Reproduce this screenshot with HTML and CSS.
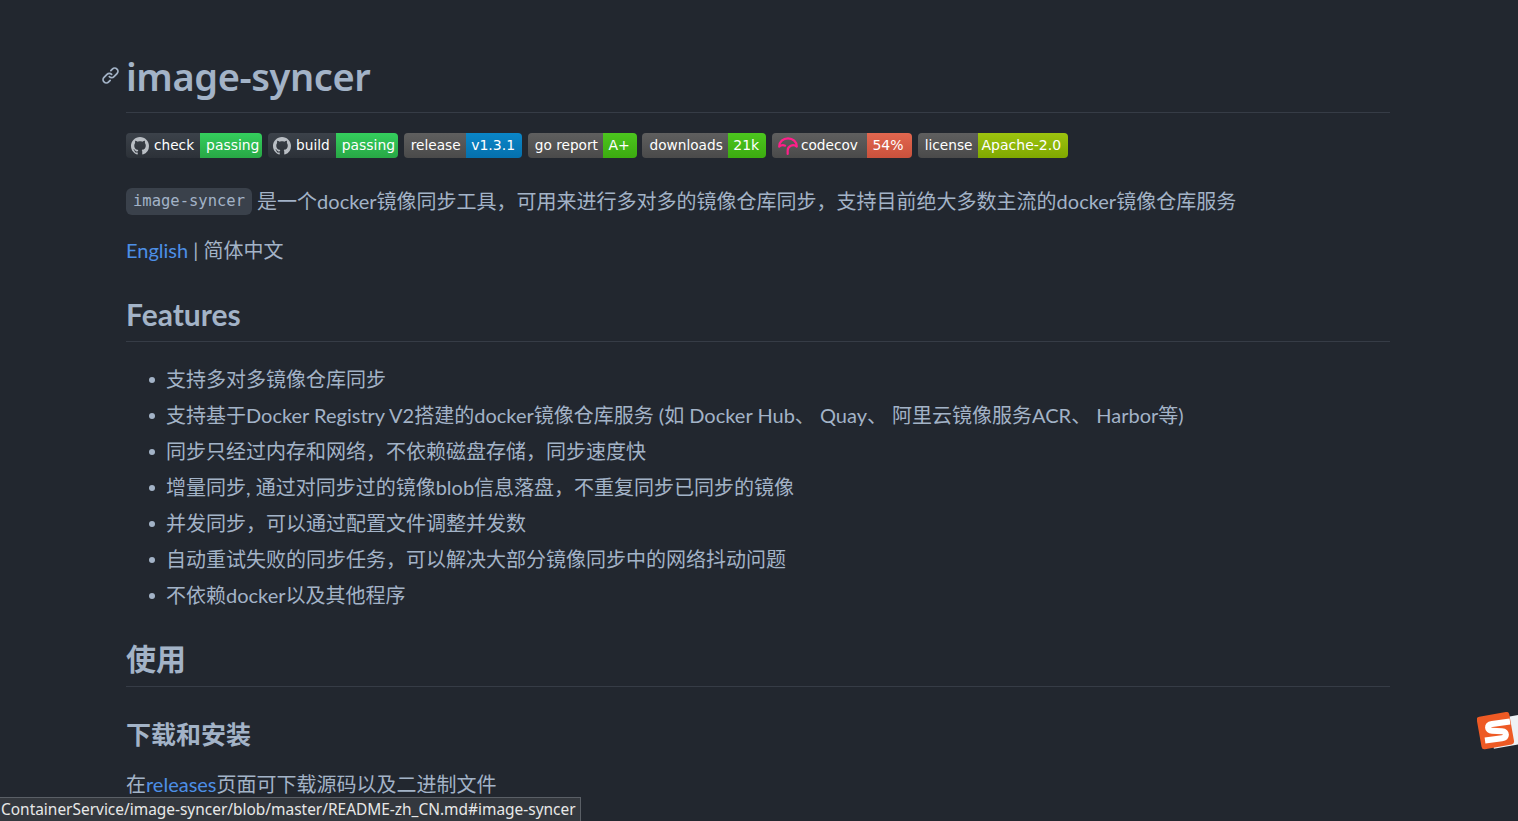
FILE: index.html
```html
<!DOCTYPE html>
<html lang="zh-CN">
<head>
<meta charset="utf-8">
<title>image-syncer</title>
<link rel="stylesheet" href="styles.css">
</head>
<body>
<main class="readme">
  <h1 class="title">
    <a class="anchor" href="#image-syncer" aria-label="anchor">
      <svg viewBox="0 0 16 16" width="19" height="19"><path fill="currentColor" d="M7.775 3.275a.75.75 0 001.06 1.06l1.25-1.25a2 2 0 112.83 2.83l-2.5 2.5a2 2 0 01-2.83 0 .75.75 0 00-1.06 1.06 3.5 3.5 0 004.95 0l2.5-2.5a3.5 3.5 0 00-4.95-4.95l-1.25 1.25zm-4.69 9.64a2 2 0 010-2.83l2.5-2.5a2 2 0 012.83 0 .75.75 0 001.06-1.06 3.5 3.5 0 00-4.95 0l-2.5 2.5a3.5 3.5 0 004.95 4.95l1.25-1.25a.75.75 0 00-1.06-1.06l-1.25 1.25a2 2 0 01-2.83 0z"/></svg>
    </a>image-syncer</h1>

  <div class="badges">
    <span class="badge"><span class="b-l b-gh"><svg class="gh" viewBox="0 0 16 16" width="18" height="18"><path fill="currentColor" d="M8 0C3.58 0 0 3.58 0 8c0 3.54 2.29 6.53 5.47 7.59.4.07.55-.17.55-.38 0-.19-.01-.82-.01-1.49-2.01.37-2.53-.49-2.69-.94-.09-.23-.48-.94-.82-1.13-.28-.15-.68-.52-.01-.53.63-.01 1.08.58 1.23.82.72 1.21 1.87.87 2.33.66.07-.52.28-.87.51-1.07-1.78-.2-3.64-.89-3.64-3.95 0-.87.31-1.59.82-2.15-.08-.2-.36-1.02.08-2.12 0 0 .67-.21 2.2.82.64-.18 1.32-.27 2-.27s1.36.09 2 .27c1.53-1.04 2.2-.82 2.2-.82.44 1.1.16 1.92.08 2.12.51.56.82 1.27.82 2.15 0 3.07-1.87 3.75-3.65 3.95.29.25.54.73.54 1.48 0 1.07-.01 1.93-.01 2.2 0 .21.15.46.55.38A8.01 8.01 0 0016 8c0-4.42-3.58-8-8-8z"/></svg>check</span><span class="b-r c-pass">passing</span></span>
    <span class="badge"><span class="b-l b-gh"><svg class="gh" viewBox="0 0 16 16" width="18" height="18"><path fill="currentColor" d="M8 0C3.58 0 0 3.58 0 8c0 3.54 2.29 6.53 5.47 7.59.4.07.55-.17.55-.38 0-.19-.01-.82-.01-1.49-2.01.37-2.53-.49-2.69-.94-.09-.23-.48-.94-.82-1.13-.28-.15-.68-.52-.01-.53.63-.01 1.08.58 1.23.82.72 1.21 1.87.87 2.33.66.07-.52.28-.87.51-1.07-1.78-.2-3.64-.89-3.64-3.95 0-.87.31-1.59.82-2.15-.08-.2-.36-1.02.08-2.12 0 0 .67-.21 2.2.82.64-.18 1.32-.27 2-.27s1.36.09 2 .27c1.53-1.04 2.2-.82 2.2-.82.44 1.1.16 1.92.08 2.12.51.56.82 1.27.82 2.15 0 3.07-1.87 3.75-3.65 3.95.29.25.54.73.54 1.48 0 1.07-.01 1.93-.01 2.2 0 .21.15.46.55.38A8.01 8.01 0 0016 8c0-4.42-3.58-8-8-8z"/></svg>build</span><span class="b-r c-pass">passing</span></span>
    <span class="badge"><span class="b-l">release</span><span class="b-r c-blue">v1.3.1</span></span>
    <span class="badge"><span class="b-l">go report</span><span class="b-r c-green">A+</span></span>
    <span class="badge"><span class="b-l">downloads</span><span class="b-r c-green">21k</span></span>
    <span class="badge"><span class="b-l b-cov"><svg class="cov" viewBox="0 0 20 20" width="22" height="22"><path fill="none" stroke="#ff1f8a" stroke-width="2" stroke-linecap="round" stroke-linejoin="round" d="M2 10.500C2 6 5.500 3 10 3s8 3 8 7.500c-1.500-1.200-3.600-1.600-5.400-.8C10.800 10.500 9.700 12 9.700 14v3.200M2 10.500c1.600-1.200 3.600-1.500 5.400-.8"/></svg>codecov</span><span class="b-r c-red">54%</span></span>
    <span class="badge"><span class="b-l">license</span><span class="b-r c-lime">Apache-2.0</span></span>
  </div>

  <p class="intro"><code class="code">image-syncer</code> 是一个docker镜像同步工具，可用来进行多对多的镜像仓库同步，支持目前绝大多数主流的docker镜像仓库服务</p>
  <p class="langs"><a href="#en">English</a> | 简体中文</p>

  <h2 class="h2">Features</h2>
  <ul class="features">
    <li>支持多对多镜像仓库同步</li>
    <li>支持基于Docker Registry V2搭建的docker镜像仓库服务 (如 Docker Hub、 Quay、 阿里云镜像服务ACR、 Harbor等)</li>
    <li>同步只经过内存和网络，不依赖磁盘存储，同步速度快</li>
    <li>增量同步, 通过对同步过的镜像blob信息落盘，不重复同步已同步的镜像</li>
    <li>并发同步，可以通过配置文件调整并发数</li>
    <li>自动重试失败的同步任务，可以解决大部分镜像同步中的网络抖动问题</li>
    <li>不依赖docker以及其他程序</li>
  </ul>

  <h2 class="h2 h2-cjk">使用</h2>
  <h3 class="h3">下载和安装</h3>
  <p class="last">在<a href="#releases">releases</a>页面可下载源码以及二进制文件</p>
</main>

<div class="statusbar">ContainerService/image-syncer/blob/master/README-zh_CN.md#image-syncer</div>

<div class="ime" aria-hidden="true">
  <svg viewBox="0 0 42 40" width="42" height="40">
    <rect x="14" y="7" width="30" height="29" fill="#eef1f4" transform="rotate(-10 20 20)"/>
    <rect x="2" y="2" width="33" height="33" rx="3" fill="#ee5a24" transform="rotate(-10 19 19)"/>
    <path fill="none" stroke="#fff" stroke-width="6" stroke-linejoin="round" d="M33 9.500 L15 12 C9.500 13 10 18.500 15 18.800 L25 19.200 C30.500 19.600 30 25.500 25 26.200 L8 28.500"/>
  </svg>
</div>
</body>
</html>
```

FILE: styles.css
```css
html, body {
  margin: 0;
  height: 100%;
  overflow: hidden;
}
body {
  background: #22272f;
  color: #a3b3c7;
  font-family: "Lato", "Noto Sans CJK SC", sans-serif;
  font-size: 20px;
  line-height: 32px;
}
a {
  color: #4d8fe6;
  text-decoration: none;
}
.readme {
  width: 1264px;
  margin-left: 126px;
  padding-top: 51px;
}
.title {
  position: relative;
  margin: 0 0 20px;
  padding-bottom: 11px;
  border-bottom: 1px solid #363c46;
  font-family: "Noto Sans", "Noto Sans CJK SC", sans-serif;
  font-size: 38px;
  line-height: 50px;
  font-weight: 600;
  letter-spacing: -0.4px;
  color: #a3b3c7;
}
.anchor {
  position: absolute;
  left: -25px;
  top: 15px;
  color: #a3b3c7;
  display: flex;
}
.badges {
  display: flex;
  gap: 5.7px;
  height: 25px;
  margin-bottom: 27px;
}
.badge {
  display: flex;
  height: 25px;
  border-radius: 4px;
  overflow: hidden;
  font-family: "DejaVu Sans", sans-serif;
  font-size: 13.7px;
  line-height: 25px;
  color: #fff;
}
.b-l {
  display: flex;
  align-items: center;
  padding: 0 5px 0 7px;
  background: linear-gradient(#5f5f5f, #4a4a4a);
}
.b-r {
  padding: 0 7px 0 5.5px;
  font-size: 14px;
}
.b-gh {
  background: linear-gradient(#3c424a, #2c3138);
  padding-right: 6px;
}
.gh {
  color: #b9bec4;
  margin-right: 5px;
  margin-left: -2px;
}
.b-cov {
  padding-right: 9px;
}
.cov {
  margin-right: 2px;
  margin-left: -2px;
}
.c-pass { background: linear-gradient(#34cf5d, #28a745); padding: 0 3px 0 6px; font-size: 13.9px; }
.c-blue { background: linear-gradient(#0a86c8, #0570ad); }
.c-green { background: linear-gradient(#4cc61e, #3cab10); }
.c-red { background: linear-gradient(#e2674f, #c9513c); padding-right: 8.5px; }
.c-lime { background: linear-gradient(#9dc40f, #7fa800); padding-left: 4px; }
.intro {
  margin: 0 0 17px;
}
.code {
  display: inline-block;
  padding: 0 7px;
  background: #3a414b;
  border-radius: 6px;
  font-family: "DejaVu Sans Mono", monospace;
  font-size: 15.500px;
  line-height: 27px;
  vertical-align: 3px;
}
.langs {
  margin: 0 0 29px;
}
.last {
  margin: 0;
}
.h2 {
  margin: 28px 0 21px;
  padding-bottom: 8px;
  border-bottom: 1px solid #363c46;
  font-size: 30px;
  line-height: 38px;
  font-weight: 700;
}
.h2-cjk {
  padding-bottom: 9px;
}
.features {
  margin: 0;
  padding: 0 0 0 40px;
  list-style: none;
}
.features li {
  position: relative;
  margin-bottom: 4px;
}
.features li::before {
  content: "";
  position: absolute;
  left: -17px;
  top: 14px;
  width: 6px;
  height: 6px;
  border-radius: 50%;
  background: #a3b3c7;
}
.h3 {
  margin: 31px 0 18px;
  font-size: 25px;
  line-height: 32px;
  font-weight: 700;
}
.statusbar {
  position: fixed;
  left: 0;
  bottom: 0;
  height: 23px;
  padding: 0 4px 0 1px;
  background: #34383e;
  border-top: 1px solid #5a5f66;
  border-right: 1px solid #5a5f66;
  color: #e8e8e8;
  font-family: "Noto Sans", "Noto Sans CJK SC", sans-serif;
  font-size: 15.450px;
  line-height: 23px;
  white-space: nowrap;
}
.ime {
  position: fixed;
  right: 0;
  top: 712px;
  width: 41px;
  height: 40px;
  overflow: hidden;
}
```
